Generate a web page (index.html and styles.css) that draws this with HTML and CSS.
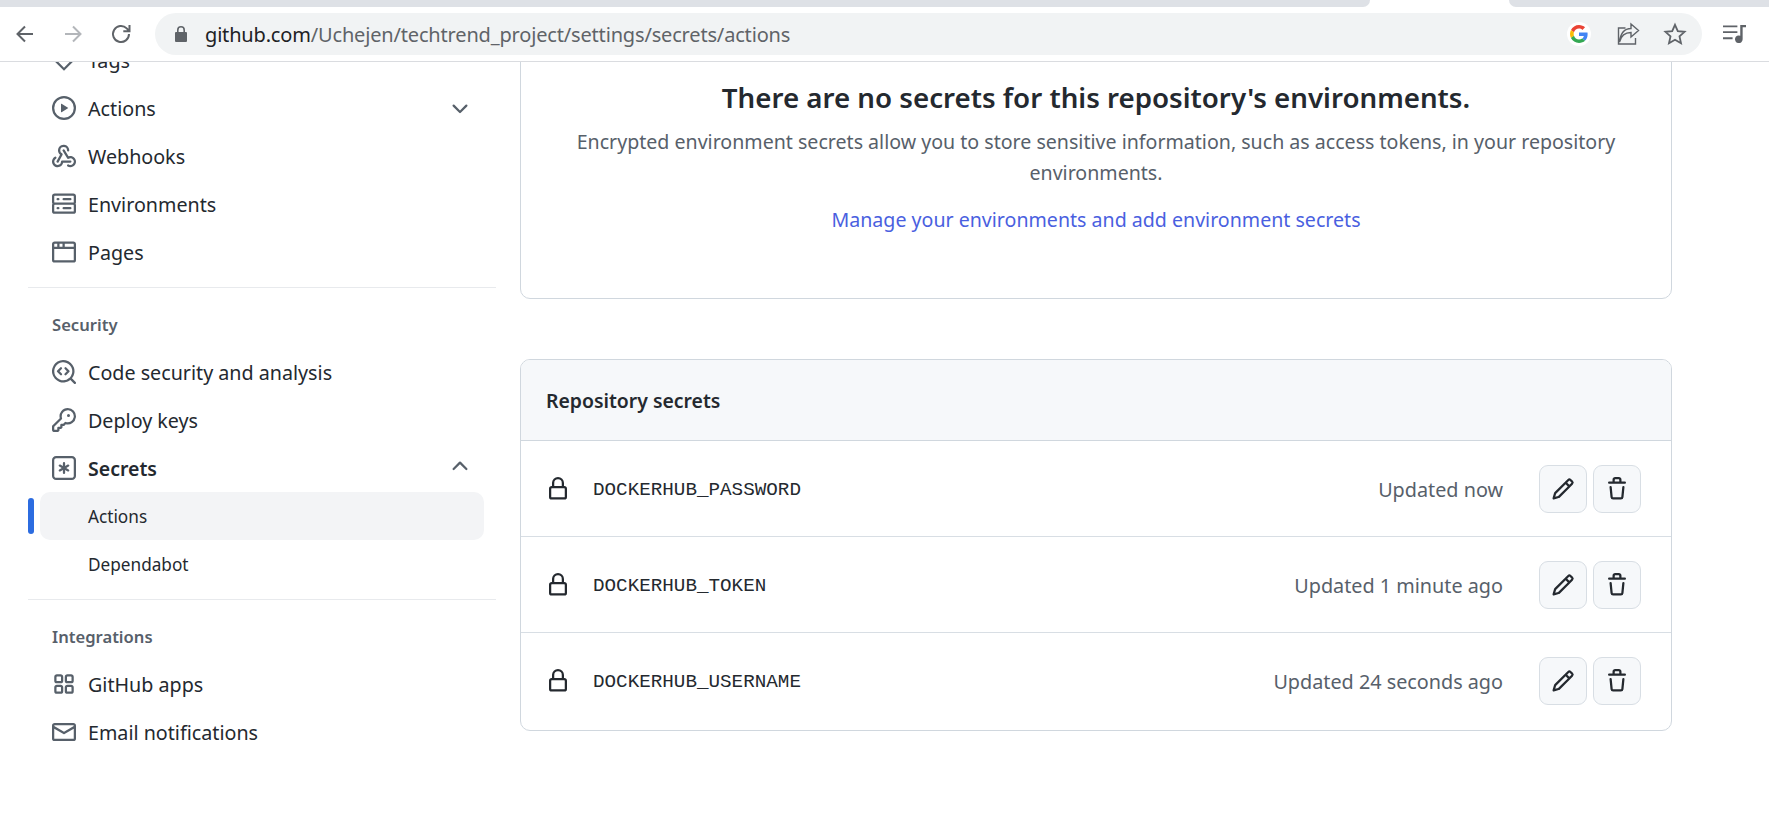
FILE: index.html
```html
<!DOCTYPE html>
<html lang="en">
<head>
<meta charset="utf-8">
<title>Actions secrets</title>
<link rel="stylesheet" href="styles.css">
</head>
<body>
<header class="chrome">
  <div class="tabstrip">
    <div class="tab-gray tab-left"></div>
    <div class="tab-active"></div>
    <div class="tab-gray tab-right"></div>
  </div>
  <div class="toolbar">
    <div class="nav-buttons">
      <svg class="nav-icon" viewBox="0 0 24 24"><path d="M20 12H5M12 4.5 4.500 12l7.500 7.500"/></svg>
      <svg class="nav-icon nav-disabled" viewBox="0 0 24 24"><path d="M4 12h15M12 4.500l7.500 7.500-7.500 7.500"/></svg>
      <svg class="nav-icon" viewBox="0 0 24 24"><path d="M20 12a8 8 0 1 1-2.300-5.600L20.500 9.200M20.500 3v6.200h-6.200"/></svg>
    </div>
    <div class="omnibox">
      <svg class="omni-lock" viewBox="0 0 14 18"><path d="M3 7V5a4 4 0 0 1 8 0v2h1a1 1 0 0 1 1 1v8a1 1 0 0 1-1 1H2a1 1 0 0 1-1-1V8a1 1 0 0 1 1-1Zm1.600 0h4.800V5a2.400 2.400 0 0 0-4.800 0Z"/></svg>
      <div class="url"><span class="url-host">github.com</span>/Uchejen/techtrend_project/settings/secrets/actions</div>
      <div class="omni-actions">
        <span class="g-badge">
          <svg class="g-logo" viewBox="0 0 48 48">
            <path fill="#EA4335" d="M24 9.500c3.540 0 6.710 1.220 9.210 3.600l6.850-6.850C35.900 2.380 30.470 0 24 0 14.620 0 6.510 5.380 2.560 13.220l7.980 6.190C12.430 13.720 17.740 9.500 24 9.500z"/>
            <path fill="#4285F4" d="M46.980 24.550c0-1.570-.15-3.090-.38-4.550H24v9.020h12.940c-.58 2.960-2.260 5.480-4.780 7.180l7.730 6c4.510-4.180 7.090-10.360 7.090-17.650z"/>
            <path fill="#FBBC05" d="M10.530 28.590c-.48-1.450-.76-2.990-.76-4.590s.27-3.140.76-4.590l-7.980-6.190C.92 16.460 0 20.120 0 24c0 3.880.92 7.540 2.560 10.780l7.970-6.190z"/>
            <path fill="#34A853" d="M24 48c6.480 0 11.930-2.130 16.080-5.810l-7.730-6c-2.150 1.450-4.920 2.300-8.350 2.300-6.260 0-11.570-4.220-13.470-9.910l-7.980 6.190C6.510 42.620 14.620 48 24 48z"/>
          </svg>
        </span>
        <svg class="omni-icon" viewBox="0 0 24 24"><path d="M9.500 6H2.500v16h17v-6M3.500 20c1.500-6 5.500-9.500 11.500-9.500V15l7.500-6.500L15 2v4.500C8.500 6.500 4.500 11.500 3.500 20Z"/></svg>
        <svg class="omni-icon omni-star" viewBox="0 0 24 24"><path d="m12 2.800 2.800 6.300 6.800.7-5.100 4.600 1.500 6.800-6-3.500-6 3.500 1.500-6.800-5.100-4.600 6.800-.7Z"/></svg>
      </div>
    </div>
    <svg class="media-icon" viewBox="0 0 24 22"><path d="M0 2h15v2H0Zm0 6h15v2H0Zm0 6.500h10v2H0Z"/><path d="M18 1.500h6V4h-3.500v12.500a4 4 0 1 1-2.500-3.700Z"/></svg>
  </div>
</header>

<div class="page">
  <nav class="sidebar">
    <ul class="nav-list nav-first">
      <li class="nav-item"><svg class="icon" viewBox="0 0 16 16"><path d="M8 15.200.8 8V1.500a.7.700 0 0 1 .7-.7H8L15.200 8ZM2.300 7.400 8 13.100 13.100 8 7.400 2.300H2.300Z"/></svg>Tags</li>
      <li class="nav-item nav-between">
        <span class="nav-label"><svg class="icon" viewBox="0 0 16 16"><path d="M8 0a8 8 0 1 1 0 16A8 8 0 0 1 8 0ZM1.500 8a6.500 6.500 0 1 0 13 0 6.500 6.500 0 0 0-13 0Zm4.879-2.773 4.264 2.559a.25.25 0 0 1 0 .428l-4.264 2.559A.25.25 0 0 1 6 10.559V5.442a.25.25 0 0 1 .379-.215Z"/></svg>Actions</span>
        <svg class="chevron chevron-down" viewBox="0 0 16 16"><path d="M12.780 5.220a.749.749 0 0 1 0 1.060l-4.250 4.250a.749.749 0 0 1-1.060 0L3.220 6.280a.749.749 0 1 1 1.060-1.060L8 8.939l3.720-3.719a.749.749 0 0 1 1.060 0Z"/></svg>
      </li>
      <li class="nav-item"><svg class="icon" viewBox="0 0 16 16"><path d="M5.500 4.250a2.250 2.250 0 0 1 4.500 0 .75.75 0 0 0 1.500 0 3.750 3.750 0 1 0-6.140 2.889l-2.272 4.258a.75.75 0 0 0 1.324.706L7 7.250a.75.75 0 0 0-.309-1.015A2.250 2.250 0 0 1 5.500 4.250Z"/><path d="M7.364 3.607a.75.75 0 0 1 1.030.257l2.608 4.349a3.750 3.750 0 1 1-.628 6.785.75.75 0 0 1 .752-1.299 2.250 2.250 0 1 0-.033-3.880.75.75 0 0 1-1.030-.256L7.107 4.636a.75.75 0 0 1 .257-1.030Z"/><path d="M2.900 8.776A.75.75 0 0 1 2.625 9.800 2.250 2.250 0 1 0 6 11.750a.75.75 0 0 1 .75-.751h5.500a.75.75 0 0 1 0 1.500H7.425a3.751 3.751 0 1 1-5.550-3.998.75.75 0 0 1 1.024.274Z"/></svg>Webhooks</li>
      <li class="nav-item"><svg class="icon" viewBox="0 0 16 16"><path d="M1.750 1h12.500c.966 0 1.750.784 1.750 1.750v4c0 .372-.116.717-.314 1 .198.283.314.628.314 1v4a1.750 1.750 0 0 1-1.750 1.750H1.750A1.750 1.750 0 0 1 0 12.750v-4c0-.372.116-.717.314-1a1.739 1.739 0 0 1-.314-1v-4C0 1.784.784 1 1.750 1ZM1.500 2.750v4c0 .138.112.25.25.25h12.500a.25.25 0 0 0 .25-.25v-4a.25.25 0 0 0-.25-.25H1.750a.25.25 0 0 0-.25.25Zm.25 5.750a.25.25 0 0 0-.25.25v4c0 .138.112.25.25.25h12.500a.25.25 0 0 0 .25-.25v-4a.25.25 0 0 0-.25-.25ZM7 4.750A.75.75 0 0 1 7.750 4h4.500a.75.75 0 0 1 0 1.500h-4.500A.75.75 0 0 1 7 4.750ZM7.750 10h4.500a.75.75 0 0 1 0 1.500h-4.500a.75.75 0 0 1 0-1.500ZM3 4.750A.75.75 0 0 1 3.750 4h.5a.75.75 0 0 1 0 1.500h-.5A.75.75 0 0 1 3 4.750ZM3.750 10h.5a.75.75 0 0 1 0 1.500h-.5a.75.75 0 0 1 0-1.500Z"/></svg>Environments</li>
      <li class="nav-item"><svg class="icon" viewBox="0 0 16 16"><path d="M0 2.750C0 1.784.784 1 1.750 1h12.500c.966 0 1.750.784 1.750 1.750v10.500A1.750 1.750 0 0 1 14.250 15H1.750A1.750 1.750 0 0 1 0 13.250ZM14.500 6h-13v7.250c0 .138.112.25.25.25h12.500a.25.25 0 0 0 .25-.25Zm-6-3.500v2h6v-1.750a.25.25 0 0 0-.25-.25ZM5 2.500v2h2v-2Zm-3.250 0a.25.25 0 0 0-.25.25V4.500h2v-2Z"/></svg>Pages</li>
    </ul>
    <div class="nav-section">
      <h3 class="nav-heading">Security</h3>
      <ul class="nav-list">
        <li class="nav-item"><svg class="icon" viewBox="0 0 16 16"><path d="M8.470 4.970a.75.75 0 0 0 0 1.060L9.940 7.500 8.470 8.970a.75.75 0 1 0 1.060 1.060l2-2a.75.75 0 0 0 0-1.060l-2-2a.75.75 0 0 0-1.060 0ZM6.530 6.030a.75.75 0 0 0-1.060-1.060l-2 2a.75.75 0 0 0 0 1.060l2 2a.75.75 0 1 0 1.060-1.060L5.060 7.500l1.470-1.470Z"/><path d="M12.246 13.307a7.501 7.501 0 1 1 1.060-1.060l2.474 2.473a.749.749 0 0 1-.326 1.275.749.749 0 0 1-.734-.215ZM1.500 7.500a6.002 6.002 0 0 0 3.608 5.504 6.002 6.002 0 0 0 6.486-1.117.75.75 0 0 1 .293-.293A6 6 0 1 0 1.500 7.500Z"/></svg>Code security and analysis</li>
        <li class="nav-item"><svg class="icon" viewBox="0 0 16 16"><path d="M10.500 0a5.499 5.499 0 1 1-1.288 10.848l-.932.932a.749.749 0 0 1-.53.22H7v.75a.749.749 0 0 1-.22.53l-.5.5a.749.749 0 0 1-.53.22H5v.75a.749.749 0 0 1-.22.53l-.5.5a.749.749 0 0 1-.53.22h-2A1.750 1.750 0 0 1 0 14.250v-2c0-.199.079-.389.22-.53l4.932-4.932A5.500 5.500 0 0 1 10.500 0Zm-4 5.500c-.001.431.069.86.205 1.269a.75.75 0 0 1-.181.768L1.500 12.560v1.690c0 .138.112.25.25.25h1.690l.06-.06v-1.190a.75.75 0 0 1 .75-.75h1.190l.06-.06v-1.190a.75.75 0 0 1 .75-.75h1.190l1.023-1.025a.75.75 0 0 1 .768-.18A4 4 0 1 0 6.500 5.500ZM11 6a1 1 0 1 1 0-2 1 1 0 0 1 0 2Z"/></svg>Deploy keys</li>
        <li class="nav-item nav-between nav-open">
          <span class="nav-label"><svg class="icon" viewBox="0 0 16 16"><path d="M0 2.750A2.750 2.750 0 0 1 2.750 0h10.500A2.750 2.750 0 0 1 16 2.750v10.500A2.750 2.750 0 0 1 13.250 16H2.750A2.750 2.750 0 0 1 0 13.250ZM2.750 1.500c-.69 0-1.250.56-1.250 1.250v10.500c0 .69.56 1.250 1.250 1.250h10.500c.69 0 1.250-.56 1.250-1.250V2.750c0-.69-.56-1.250-1.250-1.250Z"/><path d="M8 4a.75.75 0 0 1 .75.75V6.700l1.690-.975a.75.75 0 0 1 .75 1.300L9.500 8l1.690.976a.75.75 0 0 1-.75 1.298L8.750 9.300v1.951a.75.75 0 0 1-1.500 0V9.299l-1.690.976a.75.75 0 0 1-.75-1.300L6.500 8l-1.690-.975a.75.75 0 0 1 .75-1.300l1.690.976V4.750A.75.75 0 0 1 8 4Z"/></svg><span class="nav-strong">Secrets</span></span>
          <svg class="chevron chevron-up" viewBox="0 0 16 16"><path d="M3.220 10.530a.749.749 0 0 1 0-1.060l4.250-4.250a.749.749 0 0 1 1.060 0l4.250 4.250a.749.749 0 1 1-1.060 1.060L8 6.811 4.280 10.530a.749.749 0 0 1-1.060 0Z"/></svg>
        </li>
        <li class="nav-sub nav-sub-active">Actions</li>
        <li class="nav-sub">Dependabot</li>
      </ul>
    </div>
    <div class="nav-section">
      <h3 class="nav-heading">Integrations</h3>
      <ul class="nav-list">
        <li class="nav-item"><svg class="icon" viewBox="0 0 16 16"><path d="M1.500 3.250c0-.966.784-1.750 1.750-1.750h2.500c.966 0 1.750.784 1.750 1.750v2.500A1.750 1.750 0 0 1 5.750 7.500h-2.500A1.750 1.750 0 0 1 1.500 5.750Zm7 0c0-.966.784-1.750 1.750-1.750h2.500c.966 0 1.750.784 1.750 1.750v2.500a1.750 1.750 0 0 1-1.750 1.750h-2.500A1.750 1.750 0 0 1 8.500 5.750Zm-7 7c0-.966.784-1.750 1.750-1.750h2.500c.966 0 1.750.784 1.750 1.750v2.500a1.750 1.750 0 0 1-1.750 1.750h-2.500a1.750 1.750 0 0 1-1.750-1.750Zm7 0c0-.966.784-1.750 1.750-1.750h2.500c.966 0 1.750.784 1.750 1.750v2.500a1.750 1.750 0 0 1-1.750 1.750h-2.500a1.750 1.750 0 0 1-1.750-1.750ZM3.250 3a.25.25 0 0 0-.25.25v2.500c0 .138.112.25.25.25h2.500A.25.25 0 0 0 6 5.750v-2.500A.25.25 0 0 0 5.750 3Zm7 0a.25.25 0 0 0-.25.25v2.500c0 .138.112.25.25.25h2.500a.25.25 0 0 0 .25-.25v-2.500a.25.25 0 0 0-.25-.25Zm-7 7a.25.25 0 0 0-.25.25v2.500c0 .138.112.25.25.25h2.500a.25.25 0 0 0 .25-.25v-2.500a.25.25 0 0 0-.25-.25Zm7 0a.25.25 0 0 0-.25.25v2.500c0 .138.112.25.25.25h2.500a.25.25 0 0 0 .25-.25v-2.500a.25.25 0 0 0-.25-.25Z"/></svg>GitHub apps</li>
        <li class="nav-item"><svg class="icon" viewBox="0 0 16 16"><path d="M1.750 2h12.500c.966 0 1.750.784 1.750 1.750v8.500A1.750 1.750 0 0 1 14.250 14H1.750A1.750 1.750 0 0 1 0 12.250v-8.500C0 2.784.784 2 1.750 2ZM1.500 12.251c0 .138.112.25.25.25h12.500a.25.25 0 0 0 .25-.25V5.809L8.380 9.397a.75.75 0 0 1-.76 0L1.500 5.809v6.442Zm13-8.181v-.32a.25.25 0 0 0-.25-.25H1.750a.25.25 0 0 0-.25.25v.32L8 7.880Z"/></svg>Email notifications</li>
      </ul>
    </div>
  </nav>

  <main class="content">
    <section class="blank-card">
      <h2 class="blank-title">There are no secrets for this repository's environments.</h2>
      <p class="blank-text">Encrypted environment secrets allow you to store sensitive information, such as access tokens, in your repository environments.</p>
      <a class="blank-link" href="#">Manage your environments and add environment secrets</a>
    </section>

    <section class="secrets-card">
      <div class="secrets-head">Repository secrets</div>
      <div class="secret-row">
        <svg class="lock" viewBox="0 0 16 16"><path d="M4 4a4 4 0 0 1 8 0v2h.25c.966 0 1.750.784 1.750 1.750v5.500A1.750 1.750 0 0 1 12.250 15h-8.500A1.750 1.750 0 0 1 2 13.250v-5.500C2 6.784 2.784 6 3.750 6H4Zm8.250 3.500h-8.500a.25.25 0 0 0-.25.25v5.500c0 .138.112.25.25.25h8.500a.25.25 0 0 0 .25-.25v-5.500a.25.25 0 0 0-.25-.25ZM10.500 6V4a2.500 2.500 0 1 0-5 0v2Z"/></svg>
        <code class="secret-name">DOCKERHUB_PASSWORD</code>
        <span class="secret-time">Updated now</span>
        <button class="icon-btn" type="button"><svg viewBox="0 0 16 16"><path d="M11.013 1.427a1.750 1.750 0 0 1 2.474 0l1.086 1.086a1.750 1.750 0 0 1 0 2.474l-8.610 8.610c-.21.21-.47.364-.756.445l-3.251.93a.75.75 0 0 1-.927-.928l.929-3.250c.081-.286.235-.547.445-.758l8.610-8.610Zm.176 4.823L9.750 4.810l-6.286 6.287a.253.253 0 0 0-.064.108l-.558 1.953 1.953-.558a.253.253 0 0 0 .108-.064Zm1.238-3.763a.25.25 0 0 0-.354 0L10.811 3.750l1.439 1.440 1.263-1.263a.25.25 0 0 0 0-.354Z"/></svg></button>
        <button class="icon-btn" type="button"><svg viewBox="0 0 16 16"><path d="M11 1.750V3h2.250a.75.75 0 0 1 0 1.500H2.750a.75.75 0 0 1 0-1.500H5V1.750C5 .784 5.784 0 6.750 0h2.500C10.216 0 11 .784 11 1.750ZM4.496 6.675l.66 6.600a.25.25 0 0 0 .249.225h5.190a.25.25 0 0 0 .249-.225l.66-6.600a.75.75 0 0 1 1.492.149l-.66 6.600A1.748 1.748 0 0 1 10.595 15h-5.190a1.750 1.750 0 0 1-1.741-1.575l-.66-6.600a.75.75 0 1 1 1.492-.15ZM6.500 1.750V3h3V1.750a.25.25 0 0 0-.25-.25h-2.500a.25.25 0 0 0-.25.25Z"/></svg></button>
      </div>
      <div class="secret-row">
        <svg class="lock" viewBox="0 0 16 16"><path d="M4 4a4 4 0 0 1 8 0v2h.25c.966 0 1.750.784 1.750 1.750v5.500A1.750 1.750 0 0 1 12.250 15h-8.500A1.750 1.750 0 0 1 2 13.250v-5.500C2 6.784 2.784 6 3.750 6H4Zm8.250 3.500h-8.500a.25.25 0 0 0-.25.25v5.500c0 .138.112.25.25.25h8.500a.25.25 0 0 0 .25-.25v-5.500a.25.25 0 0 0-.25-.25ZM10.500 6V4a2.500 2.500 0 1 0-5 0v2Z"/></svg>
        <code class="secret-name">DOCKERHUB_TOKEN</code>
        <span class="secret-time">Updated 1 minute ago</span>
        <button class="icon-btn" type="button"><svg viewBox="0 0 16 16"><path d="M11.013 1.427a1.750 1.750 0 0 1 2.474 0l1.086 1.086a1.750 1.750 0 0 1 0 2.474l-8.610 8.610c-.21.21-.47.364-.756.445l-3.251.93a.75.75 0 0 1-.927-.928l.929-3.250c.081-.286.235-.547.445-.758l8.610-8.610Zm.176 4.823L9.750 4.810l-6.286 6.287a.253.253 0 0 0-.064.108l-.558 1.953 1.953-.558a.253.253 0 0 0 .108-.064Zm1.238-3.763a.25.25 0 0 0-.354 0L10.811 3.750l1.439 1.440 1.263-1.263a.25.25 0 0 0 0-.354Z"/></svg></button>
        <button class="icon-btn" type="button"><svg viewBox="0 0 16 16"><path d="M11 1.750V3h2.250a.75.75 0 0 1 0 1.500H2.750a.75.75 0 0 1 0-1.500H5V1.750C5 .784 5.784 0 6.750 0h2.500C10.216 0 11 .784 11 1.750ZM4.496 6.675l.66 6.600a.25.25 0 0 0 .249.225h5.190a.25.25 0 0 0 .249-.225l.66-6.600a.75.75 0 0 1 1.492.149l-.66 6.600A1.748 1.748 0 0 1 10.595 15h-5.190a1.750 1.750 0 0 1-1.741-1.575l-.66-6.600a.75.75 0 1 1 1.492-.15ZM6.500 1.750V3h3V1.750a.25.25 0 0 0-.25-.25h-2.500a.25.25 0 0 0-.25.25Z"/></svg></button>
      </div>
      <div class="secret-row">
        <svg class="lock" viewBox="0 0 16 16"><path d="M4 4a4 4 0 0 1 8 0v2h.25c.966 0 1.750.784 1.750 1.750v5.500A1.750 1.750 0 0 1 12.250 15h-8.500A1.750 1.750 0 0 1 2 13.250v-5.500C2 6.784 2.784 6 3.750 6H4Zm8.250 3.500h-8.500a.25.25 0 0 0-.25.25v5.500c0 .138.112.25.25.25h8.500a.25.25 0 0 0 .25-.25v-5.500a.25.25 0 0 0-.25-.25ZM10.500 6V4a2.500 2.500 0 1 0-5 0v2Z"/></svg>
        <code class="secret-name">DOCKERHUB_USERNAME</code>
        <span class="secret-time">Updated 24 seconds ago</span>
        <button class="icon-btn" type="button"><svg viewBox="0 0 16 16"><path d="M11.013 1.427a1.750 1.750 0 0 1 2.474 0l1.086 1.086a1.750 1.750 0 0 1 0 2.474l-8.610 8.610c-.21.21-.47.364-.756.445l-3.251.93a.75.75 0 0 1-.927-.928l.929-3.250c.081-.286.235-.547.445-.758l8.610-8.610Zm.176 4.823L9.750 4.810l-6.286 6.287a.253.253 0 0 0-.064.108l-.558 1.953 1.953-.558a.253.253 0 0 0 .108-.064Zm1.238-3.763a.25.25 0 0 0-.354 0L10.811 3.750l1.439 1.440 1.263-1.263a.25.25 0 0 0 0-.354Z"/></svg></button>
        <button class="icon-btn" type="button"><svg viewBox="0 0 16 16"><path d="M11 1.750V3h2.250a.75.75 0 0 1 0 1.500H2.750a.75.75 0 0 1 0-1.500H5V1.750C5 .784 5.784 0 6.750 0h2.500C10.216 0 11 .784 11 1.750ZM4.496 6.675l.66 6.600a.25.25 0 0 0 .249.225h5.190a.25.25 0 0 0 .249-.225l.66-6.600a.75.75 0 0 1 1.492.149l-.66 6.600A1.748 1.748 0 0 1 10.595 15h-5.190a1.750 1.750 0 0 1-1.741-1.575l-.66-6.600a.75.75 0 1 1 1.492-.15ZM6.500 1.750V3h3V1.750a.25.25 0 0 0-.25-.25h-2.500a.25.25 0 0 0-.25.25Z"/></svg></button>
      </div>
    </section>
  </main>
</div>
</body>
</html>
```

FILE: styles.css
```css
* { box-sizing: border-box; }
html, body { margin: 0; height: 100%; overflow: hidden; background: #fff; }
body { font-family: "Noto Sans", "Open Sans", sans-serif; color: #24292f; }

.chrome { position: relative; z-index: 2; height: 62px; background: #fff; border-bottom: 1px solid #dadce0; }
.tabstrip { display: flex; height: 7px; }
.tab-gray { background: #dee1e6; }
.tab-left { flex: 0 0 1370px; border-bottom-right-radius: 8px; }
.tab-active { flex: 0 0 139px; background: #fff; }
.tab-right { flex: 1; border-bottom-left-radius: 8px; }

.toolbar { display: flex; align-items: center; height: 54px; padding: 6px 23px 6px 13px; }
.nav-buttons { display: flex; gap: 24px; flex: 0 0 142px; align-items: center; }
.nav-icon { width: 24px; height: 24px; fill: none; stroke: #5f6368; stroke-width: 2; }
.nav-disabled { stroke: #b3b6ba; }
.omnibox { display: flex; align-items: center; flex: 0 0 1547px; height: 42px; border-radius: 21px; background: #f1f3f4; padding: 0 15px 0 19px; }
.omni-lock { width: 14px; height: 18px; fill: #5f6368; flex: none; }
.url { margin-left: 17px; font-size: 20px; color: #5f6368; letter-spacing: -.17px; white-space: nowrap; }
.url-host { color: #202124; }
.omni-actions { margin-left: auto; display: flex; align-items: center; }
.g-badge { display: flex; align-items: center; justify-content: center; width: 24px; height: 24px; border-radius: 50%; background: #fff; }
.g-logo { width: 18px; height: 18px; }
.omni-icon { width: 24px; height: 24px; margin-left: 25px; fill: none; stroke: #5f6368; stroke-width: 1.4; }
.omni-star { margin-left: 23px; stroke-width: 1.8; }
.media-icon { width: 24px; height: 22px; margin-left: 21px; fill: #5f6368; }

.page { display: flex; height: 763px; overflow: hidden; }
.sidebar { flex: 0 0 520px; padding: 0 24px 0 28px; font-size: 19.7px; }
.nav-list { list-style: none; margin: 0; padding: 0; }
.nav-first { margin-top: -26px; }
.nav-item { display: flex; align-items: center; height: 48px; padding-left: 24px; gap: 12px; white-space: nowrap; }
.nav-between { justify-content: space-between; padding-right: 28px; }
.nav-label { display: flex; align-items: center; gap: 12px; }
.nav-strong { font-size: 19.5px; font-weight: 600; }
.icon { width: 24px; height: 24px; fill: #57606a; flex: none; }
.chevron { width: 24px; height: 24px; fill: #57606a; flex: none; margin-right: -4px; }
.chevron-down { margin-top: 2px; }
.chevron-up { margin-top: -4px; }
.nav-section { margin-top: 11px; border-top: 1px solid #e8eaed; }
.nav-heading { margin: 0; padding: 25px 0 11px 24px; font-size: 16.6px; line-height: 24px; font-weight: 600; color: #57606a; }
.nav-sub { display: flex; align-items: center; height: 48px; margin-left: 12px; margin-right: 12px; padding-left: 48px; font-size: 17.2px; border-radius: 10px; position: relative; }
.nav-sub-active { background: #f3f4f6; }
.nav-sub-active::before { content: ""; position: absolute; left: -12px; top: 6px; width: 6px; height: 36px; border-radius: 3px; background: #2c6ce0; }

.content { flex: 0 0 1152px; }
.blank-card { margin-top: -10px; height: 247px; padding: 24px 30px 0; border: 1px solid #d0d7de; border-radius: 10px; text-align: center; }
.blank-title { margin: 0; font-size: 27.7px; line-height: 40px; font-weight: 600; color: #24292f; }
.blank-text { margin: 9px 0 16px; font-size: 19.6px; line-height: 31px; color: #57606a; }
.blank-link { display: block; font-size: 19.6px; line-height: 32px; color: #4a5fe0; text-decoration: none; }

.secrets-card { margin-top: 60px; border: 1px solid #d0d7de; border-radius: 10px; overflow: hidden; }
.secrets-head { display: flex; align-items: center; height: 81px; padding: 0 25px; background: #f6f8fa; border-bottom: 1px solid #d0d7de; font-size: 19.4px; font-weight: 600; }
.secret-row { display: flex; align-items: center; height: 96px; padding: 1px 30px 0 25px; border-bottom: 1px solid #d8dee4; }
.secret-row:last-child { border-bottom: 0; height: 97px; padding: 0 30px 1px 25px; }
.lock { width: 24px; height: 24px; fill: #24292f; flex: none; }
.secret-name { margin: 2px 0 0 23px; font-family: "Liberation Mono", monospace; font-size: 19.25px; }
.secret-time { margin-left: auto; margin-right: 36px; font-size: 19.8px; color: #57606a; }
.icon-btn { display: flex; align-items: center; justify-content: center; width: 48px; height: 48px; padding: 0; margin-left: 6px; background: #f6f8fa; border: 1px solid #d8dee4; border-radius: 9px; }
.secret-time + .icon-btn { margin-left: 0; }
.icon-btn svg { width: 24px; height: 24px; fill: #24292f; }
```
